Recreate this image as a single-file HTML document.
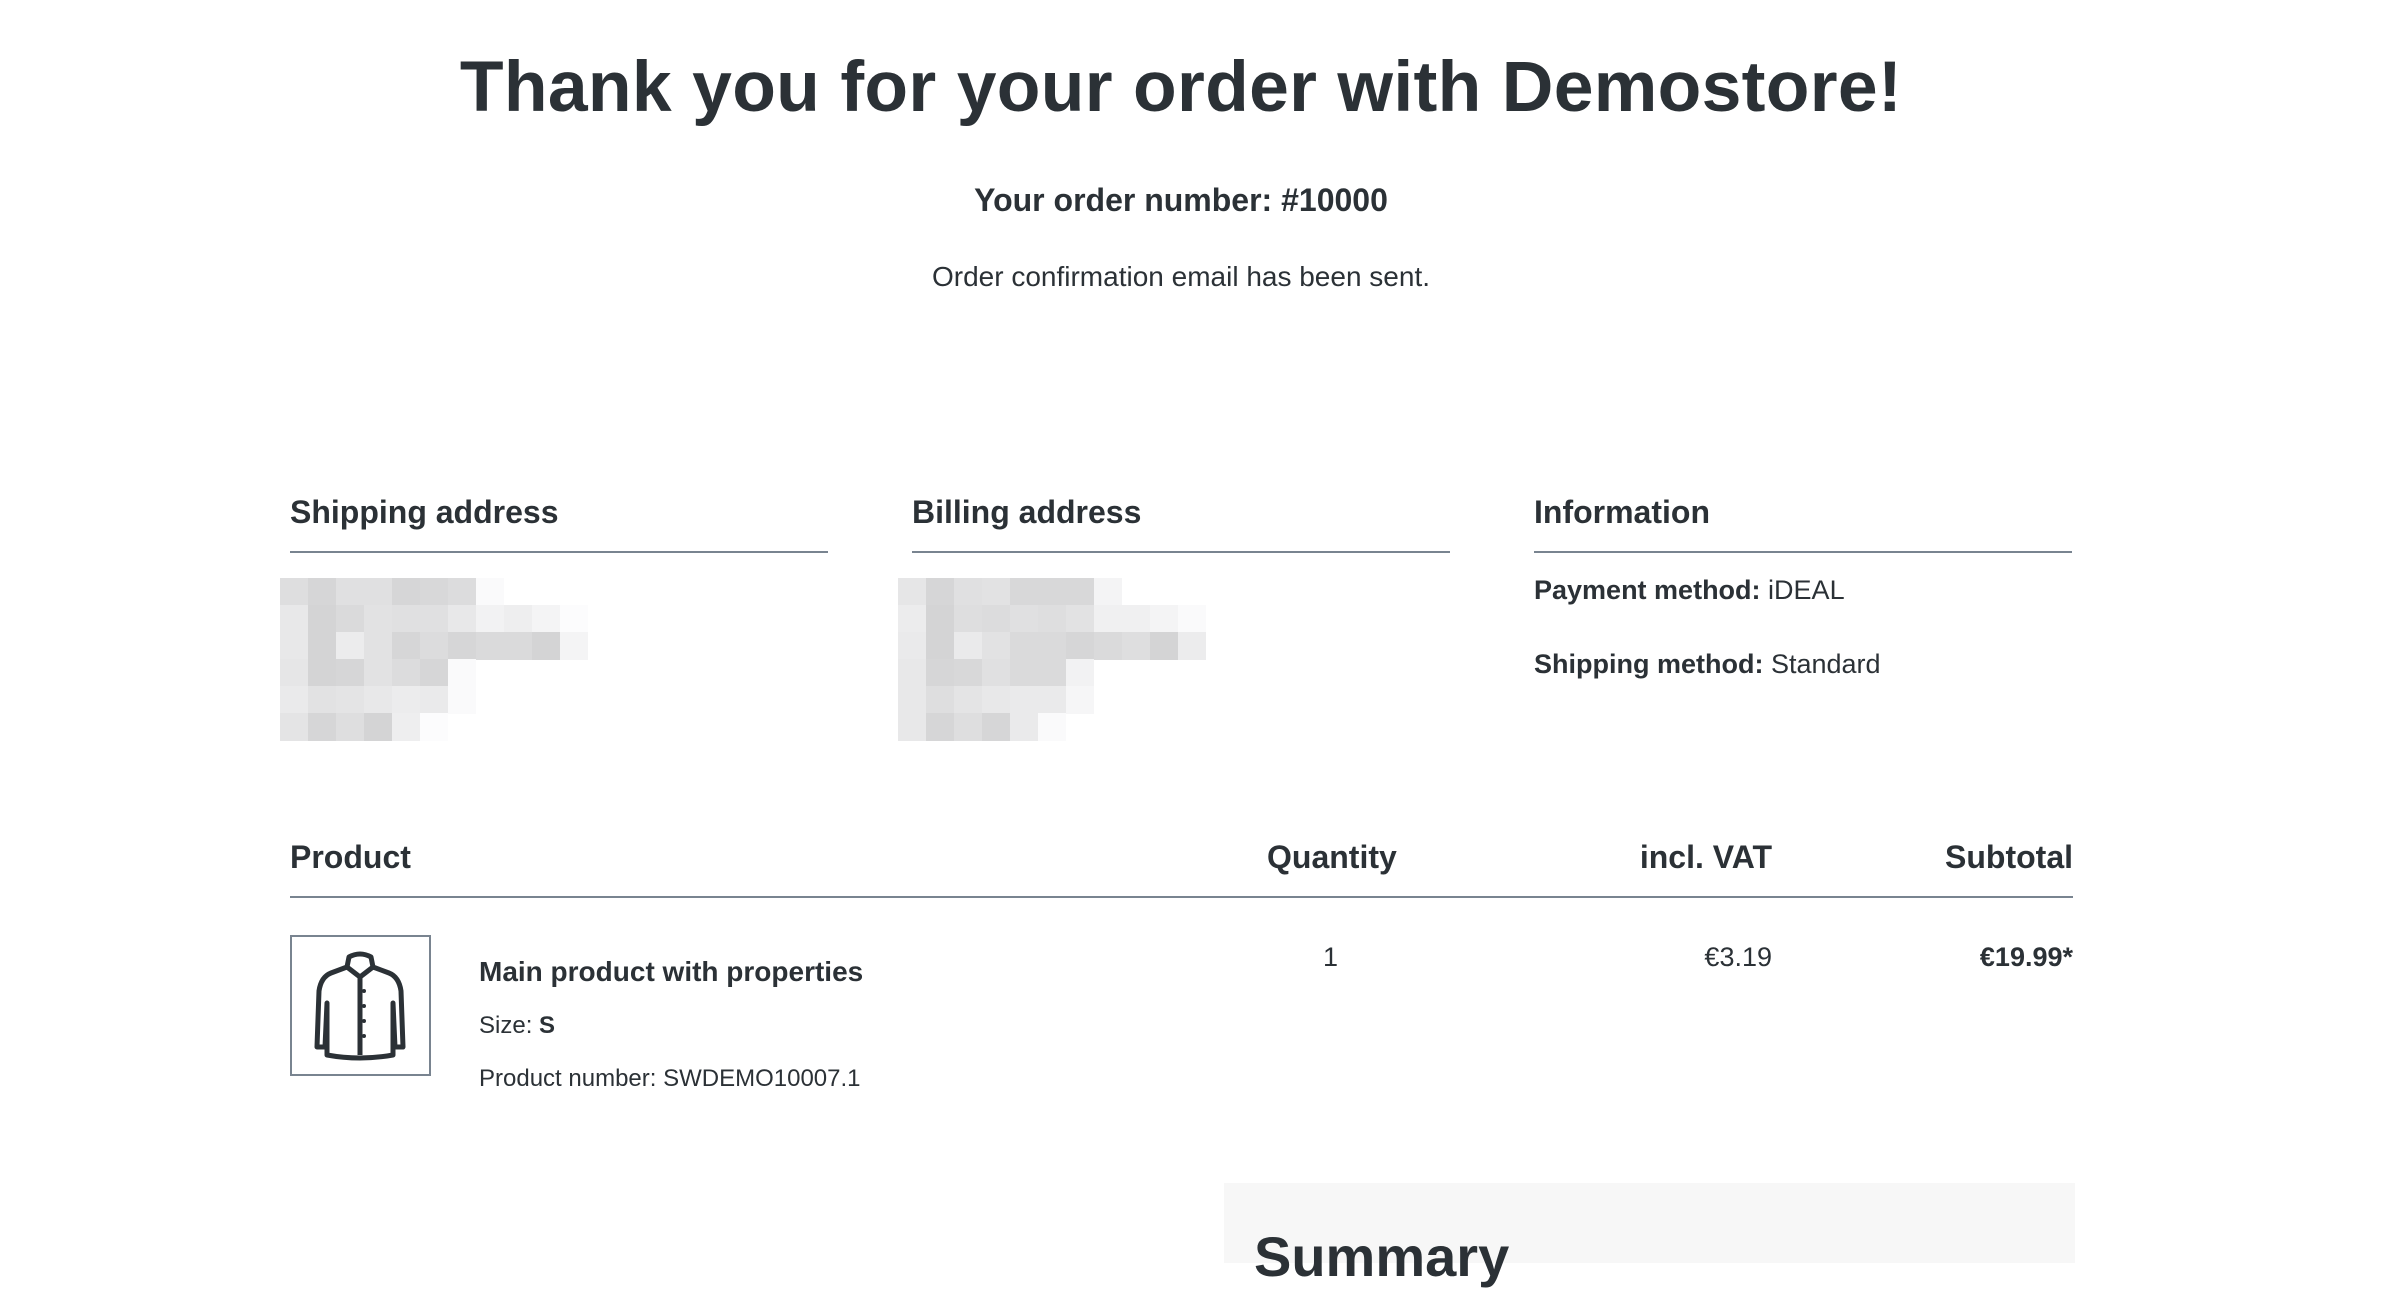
<!DOCTYPE html>
<html><head><meta charset="utf-8"><style>
*{margin:0;padding:0;box-sizing:border-box}
body{width:2382px;height:1254px;overflow:hidden;background:#fff;font-family:"Liberation Sans",Arial,sans-serif;color:#2b3136;position:relative}
.a{position:absolute;white-space:nowrap}
h1{position:absolute;left:0;width:2362px;text-align:center;top:46px;font-size:71.5px;font-weight:bold;letter-spacing:0.3px}
.c{left:0;width:2362px;text-align:center}
.h{font-size:32px;font-weight:bold}
.line{position:absolute;height:2px;background:#798490}
.px{position:absolute;width:28px}
</style></head><body>
<h1>Thank you for your order with Demostore!</h1>
<div class="a c" style="top:182px;font-size:32px;font-weight:bold">Your order number: #10000</div>
<div class="a c" style="top:261px;font-size:28px">Order confirmation email has been sent.</div>

<div class="a h" style="left:290px;top:494px">Shipping address</div>
<div class="a h" style="left:912px;top:494px">Billing address</div>
<div class="a h" style="left:1534px;top:494px">Information</div>
<div class="line" style="left:290px;top:551px;width:538px"></div>
<div class="line" style="left:912px;top:551px;width:538px"></div>
<div class="line" style="left:1534px;top:551px;width:538px"></div>

<div id="g1" style="position:absolute;left:280px;top:578px"></div>
<div id="g2" style="position:absolute;left:898px;top:578px"></div>

<div class="a" style="left:1534px;top:575px;font-size:27px"><b>Payment method:</b> iDEAL</div>
<div class="a" style="left:1534px;top:649px;font-size:27px"><b>Shipping method:</b> Standard</div>

<div class="a h" style="left:290px;top:839px">Product</div>
<div class="a h" style="left:1267px;top:839px">Quantity</div>
<div class="a h" style="right:610px;top:839px">incl. VAT</div>
<div class="a h" style="right:309px;top:839px">Subtotal</div>
<div class="line" style="left:290px;top:896px;width:1783px"></div>

<div style="position:absolute;left:290px;top:935px;width:141px;height:141px;border:2px solid #798490"></div>
<svg style="position:absolute;left:307px;top:951px" width="106" height="110" viewBox="0 0 106 110" fill="none" stroke="#2b3136" stroke-width="5" stroke-linejoin="round">
<path d="M42 6 Q53 0 64 6 L66 16 L82 22 Q92 26 94 40 L96 96 L88 96 L86 52 L86 104 Q53 110 20 104 L20 52 L18 96 L10 96 L12 40 Q14 26 24 22 L40 16 Z"/>
<path d="M40 16 L53 26 L66 16 M53 26 L53 104"/>
<g fill="#2b3136" stroke="none"><circle cx="57" cy="40" r="2"/><circle cx="57" cy="55" r="2"/><circle cx="57" cy="70" r="2"/><circle cx="57" cy="85" r="2"/></g>
</svg>
<div class="a" style="left:479px;top:956px;font-size:28px;font-weight:bold">Main product with properties</div>
<div class="a" style="left:479px;top:1012px;font-size:24px">Size: <b>S</b></div>
<div class="a" style="left:479px;top:1065px;font-size:24px">Product number: SWDEMO10007.1</div>
<div class="a" style="left:1323px;top:942px;font-size:27px">1</div>
<div class="a" style="right:610px;top:942px;font-size:27px">€3.19</div>
<div class="a" style="right:309px;top:942px;font-size:27px;font-weight:bold">€19.99*</div>

<div style="position:absolute;left:1224px;top:1183px;width:851px;height:80px;background:#f7f7f7"></div>
<div class="a" style="left:1254px;top:1224px;font-size:56px;font-weight:bold">Summary</div>

<script>
function grid(id,rows){var g=document.getElementById(id),y=0;
rows.forEach(function(r,i){for(var j=0;j<r.length;j++){var v=r[j];if(!v)continue;var d=document.createElement('div');d.className='px';d.style.left=(j*28)+'px';d.style.top=y+'px';d.style.height='28px';d.style.background='rgb('+v+','+v+','+(v+1)+')';g.appendChild(d);}y+=27;});}
grid('g1',[[222,214,224,224,214,216,220,250],[232,212,218,226,224,224,232,242,238,244,252],[232,212,236,226,214,220,214,218,218,212,244],[230,212,214,226,220,214,250],[234,226,228,232,236,234,250],[228,214,222,212,238,252]]);
grid('g2',[[230,214,224,226,216,216,216,244],[236,212,222,220,224,222,226,240,240,244,250],[234,212,234,226,218,218,214,218,222,212,236],[232,214,216,224,218,218,242],[232,222,228,232,234,234,246],[232,214,222,214,234,250]]);
</script>
</body></html>
